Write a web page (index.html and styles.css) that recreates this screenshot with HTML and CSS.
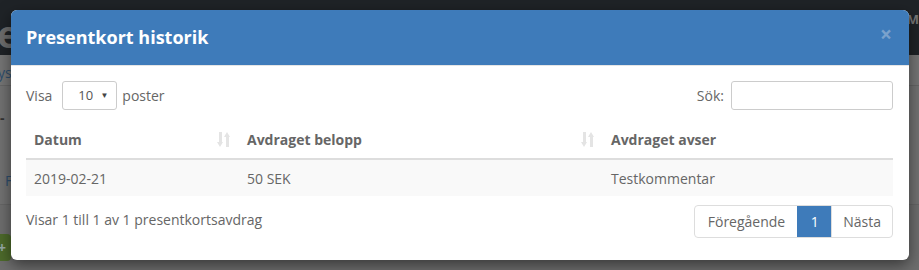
FILE: index.html
```
<!DOCTYPE html>
<html lang="sv">
<head>
    <meta charset="UTF-8">
    <meta name="viewport" content="width=device-width, initial-scale=1.0">
    <title>Presentkort historik</title>
    <link rel="stylesheet" href="styles.css">
</head>
<body>
    <div class="page">
        <div class="navbar">
            <span class="brand">e</span>
            <span class="nav-user">Mi</span>
        </div>
        <div class="subnav"><span class="crumb">ys</span></div>
        <div class="content">
            <span class="dash">-</span>
            <span class="letter">F</span>
        </div>
        <div class="bottom">
            <span class="green-btn">+</span>
        </div>
    </div>

    <div class="modal">
        <div class="modal-header">
            <h4>Presentkort historik</h4>
            <span class="close">&times;</span>
        </div>
        <div class="modal-body">
            <div class="table-top">
                <label class="length">
                    Visa
                    <span class="select">10 <span class="caret">&#9660;</span></span>
                    poster
                </label>
                <label class="search">
                    Sök:
                    <input type="text">
                </label>
            </div>

            <table class="history">
                <thead>
                    <tr>
                        <th class="col-date">Datum <span class="sort"></span></th>
                        <th class="col-amount">Avdraget belopp <span class="sort"></span></th>
                        <th class="col-note">Avdraget avser</th>
                    </tr>
                </thead>
                <tbody>
                    <tr>
                        <td>2019-02-21</td>
                        <td>50 SEK</td>
                        <td>Testkommentar</td>
                    </tr>
                </tbody>
            </table>

            <div class="table-bottom">
                <div class="info">Visar 1 till 1 av 1 presentkortsavdrag</div>
                <div class="pagination">
                    <a class="page-btn prev">Föregående</a>
                    <a class="page-btn active">1</a>
                    <a class="page-btn next">Nästa</a>
                </div>
            </div>
        </div>
    </div>
</body>
</html>
```

FILE: styles.css
```
* {
    margin: 0;
    padding: 0;
    box-sizing: border-box;
}

body {
    font-family: 'Open Sans', 'Liberation Sans', sans-serif;
    font-size: 14px;
    color: #666;
    background-color: #6f6f6f;
    height: 270px;
    overflow: hidden;
}

/* page behind the backdrop */
.page {
    display: flex;
    flex-direction: column;
    height: 100%;
}

.navbar {
    height: 55px;
    background-color: #1f2327;
    display: flex;
    justify-content: space-between;
    align-items: flex-start;
}

.brand {
    font-size: 38px;
    font-weight: bold;
    color: #6d6d6d;
    line-height: 1;
    margin-top: 14px;
    margin-left: -3px;
}

.nav-user {
    font-weight: bold;
    font-size: 13px;
    color: #777;
    margin-top: 10px;
    margin-right: -4px;
}

.subnav {
    height: 31px;
    background-color: #757575;
    border-bottom: 1px solid #666;
    padding-top: 8px;
}

.crumb {
    color: #2e4e6e;
    margin-left: -2px;
}

.content {
    height: 119px;
    background-color: #727272;
    border-bottom: 1px solid #666;
    position: relative;
}

.dash {
    position: absolute;
    top: 22px;
    left: 0;
    color: #333;
    font-weight: bold;
}

.letter {
    position: absolute;
    top: 85px;
    left: 5px;
    color: #2e4e6e;
}

.bottom {
    flex: 1;
    background-color: #6e6e6e;
    padding-top: 29px;
}

.green-btn {
    display: block;
    width: 11px;
    height: 27px;
    background-color: #4d6a2b;
    border-radius: 0 4px 4px 0;
    color: #9aa;
    font-weight: bold;
    line-height: 27px;
    text-indent: -2px;
}

/* modal */
.modal {
    position: absolute;
    top: 10px;
    left: 11px;
    width: 898px;
    height: 250px;
    background-color: #fff;
    border-radius: 6px;
    overflow: hidden;
    box-shadow: 0 5px 15px rgba(0, 0, 0, 0.5);
}

.modal-header {
    height: 56px;
    background-color: #3e7bba;
    border-bottom: 1px solid #e5e5e5;
    display: flex;
    align-items: center;
    justify-content: space-between;
    padding: 0 15px;
}

.modal-header h4 {
    color: #fff;
    font-size: 18px;
    font-weight: bold;
    margin-top: -1px;
}

.close {
    color: #7aa2cc;
    font-size: 21px;
    font-weight: bold;
    line-height: 1;
    margin-top: -6px;
    margin-right: 2px;
}

.modal-body {
    padding: 15px 15px 0;
}

.table-top {
    display: flex;
    justify-content: space-between;
    align-items: center;
    height: 30px;
    margin-top: -1px;
}

.length,
.search {
    display: flex;
    align-items: center;
    gap: 5px;
}

.select {
    display: inline-flex;
    align-items: center;
    justify-content: space-between;
    width: 55px;
    height: 29px;
    border: 1px solid #ccc;
    border-radius: 3px;
    padding: 0 8px 0 15px;
    margin-left: 5px;
    color: #555;
    font-size: 13px;
}

.caret {
    font-size: 8px;
    color: #444;
    margin-top: -2px;
}

.search input {
    width: 162px;
    height: 29px;
    border: 1px solid #ccc;
    border-radius: 3px;
    margin-left: 2px;
    margin-right: 1px;
}

.history {
    width: 867px;
    border-collapse: collapse;
    margin-top: 11px;
}

.history th {
    text-align: left;
    font-weight: bold;
    height: 38px;
    padding: 0 8px 1px;
    border-bottom: 2px solid #ddd;
    position: relative;
}

.col-date {
    width: 213px;
}

.col-amount {
    width: 364px;
}

.history td {
    height: 37px;
    padding: 0 8px;
    background-color: #f9f9f9;
}

.sort {
    position: absolute;
    right: 8px;
    top: 11px;
    width: 14px;
    height: 15px;
    background:
        linear-gradient(#e4e4e4, #e4e4e4) 2px 0 / 3px 10px no-repeat,
        linear-gradient(#e4e4e4, #e4e4e4) 9px 4px / 3px 11px no-repeat;
}

.sort::before,
.sort::after {
    content: '';
    position: absolute;
    border-left: 3.5px solid transparent;
    border-right: 3.5px solid transparent;
}

.sort::before {
    left: 0;
    top: 10px;
    border-top: 5px solid #e4e4e4;
}

.sort::after {
    left: 7px;
    top: 0;
    border-bottom: 5px solid #e4e4e4;
}

.table-bottom {
    display: flex;
    justify-content: space-between;
    align-items: flex-start;
    margin-top: 9px;
}

.info {
    padding-top: 5px;
}

.pagination {
    display: flex;
    border: 1px solid #ddd;
    border-radius: 4px;
    overflow: hidden;
    margin-right: 1px;
}

.page-btn {
    height: 31px;
    line-height: 31px;
    padding: 0 12px;
    color: #666;
}

.page-btn.prev {
    padding: 0 12px 0 13px;
}

.page-btn.next {
    padding: 0 11px;
}

.page-btn + .page-btn {
    border-left: 1px solid #ddd;
}

.page-btn.active {
    background-color: #3e7bba;
    color: #fff;
    border-color: #3e7bba;
    width: 34px;
    text-align: center;
    padding: 0;
}
```
